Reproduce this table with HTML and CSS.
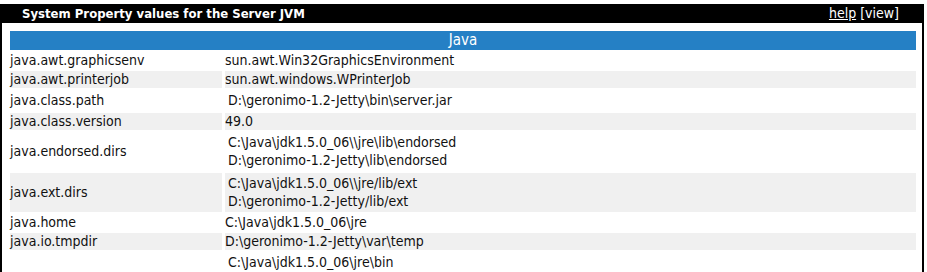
FILE: index.html
```html
<!DOCTYPE html>
<html>
<head>
<meta charset="utf-8">
<link rel="stylesheet" href="styles.css">
</head>
<body>
<div class="portlet">
  <div class="portlet-head">
    <span class="portlet-title">System Property values for the Server JVM</span>
    <span class="portlet-links"><a class="help" href="#">help</a> [view]</span>
  </div>
  <div class="portlet-body">
    <table class="props">
      <tr><th colspan="2" class="group">Java</th></tr>
      <tr class="light"><td class="key">java.awt.graphicsenv</td><td class="val">sun.awt.Win32GraphicsEnvironment</td></tr>
      <tr class="dark"><td class="key">java.awt.printerjob</td><td class="val">sun.awt.windows.WPrinterJob</td></tr>
      <tr class="light"><td class="key">java.class.path</td><td class="val"><div class="paths"><div>D:\geronimo-1.2-Jetty\bin\server.jar</div></div></td></tr>
      <tr class="dark"><td class="key">java.class.version</td><td class="val">49.0</td></tr>
      <tr class="light"><td class="key">java.endorsed.dirs</td><td class="val"><div class="paths"><div>C:\Java\jdk1.5.0_06\\jre\lib\endorsed</div><div>D:\geronimo-1.2-Jetty\lib\endorsed</div></div></td></tr>
      <tr class="dark"><td class="key">java.ext.dirs</td><td class="val"><div class="paths"><div>C:\Java\jdk1.5.0_06\\jre/lib/ext</div><div>D:\geronimo-1.2-Jetty/lib/ext</div></div></td></tr>
      <tr class="light"><td class="key">java.home</td><td class="val">C:\Java\jdk1.5.0_06\jre</td></tr>
      <tr class="dark"><td class="key">java.io.tmpdir</td><td class="val">D:\geronimo-1.2-Jetty\var\temp</td></tr>
      <tr class="light"><td class="key">java.library.path</td><td class="val"><div class="paths"><div>C:\Java\jdk1.5.0_06\jre\bin</div><div>.</div><div>C:\WINDOWS\system32</div><div>C:\WINDOWS</div></div></td></tr>
    </table>
  </div>
</div>
</body>
</html>
```
FILE: styles.css
```css
html, body {
  margin: 0;
  padding: 0;
  background: #fff;
}
body {
  font-family: "DejaVu Sans Condensed", "DejaVu Sans", Verdana, sans-serif;
  font-size: 14px;
  color: #111;
}
.portlet {
  margin-top: 4px;
  width: 924px;
  box-sizing: border-box;
  border-left: 2px solid #000;
  border-right: 2px solid #000;
}
.portlet-head {
  background: #000;
  color: #fff;
  height: 19px;
  display: flex;
  align-items: center;
  justify-content: space-between;
  padding: 0 23px 0 20px;
  line-height: 19px;
}
.portlet-title {
  font-weight: bold;
  font-size: 13px;
}
.portlet-links {
  font-size: 14px;
}
.portlet-links .help {
  color: #fff;
  text-decoration: underline;
}
.portlet-body {
  padding: 8px 6px 0 8px;
}
.props {
  border-collapse: separate;
  border-spacing: 3px 2px;
  margin: -2px -3px 0;
  width: calc(100% + 6px);
}
.props td, .props th {
  padding: 0;
  vertical-align: middle;
  line-height: 17px;
}
.group {
  background: #2580c5;
  color: #fff;
  font-weight: normal;
  font-size: 15px;
  height: 19px;
  text-align: center;
}
.props th.group {
  line-height: 19px;
}
.key {
  width: 212px;
  height: 17px;
}
.dark td {
  background: #f0f0f0;
}
.paths {
  padding: 1px 0 2px 3px;
  line-height: 18px;
}
```
